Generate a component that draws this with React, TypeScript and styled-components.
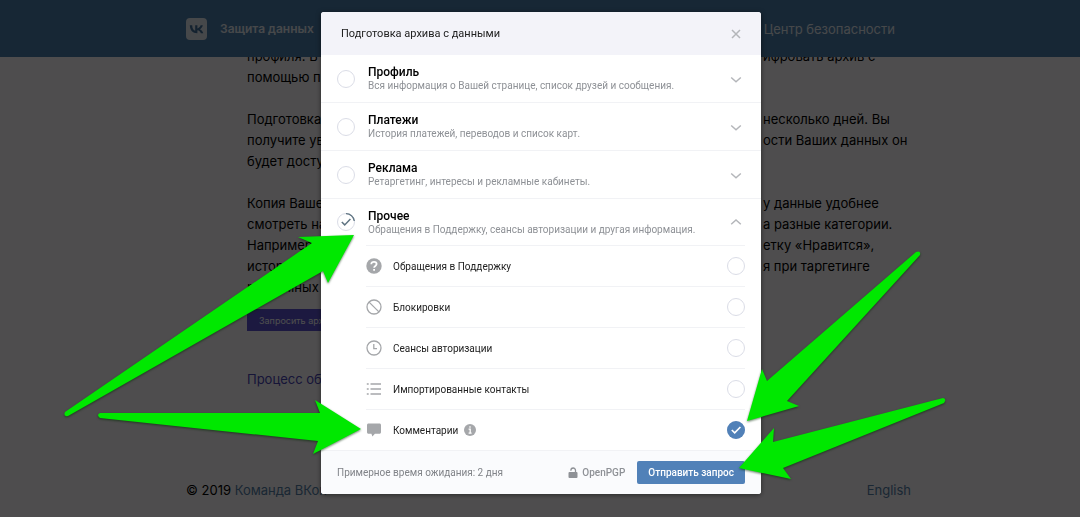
import React from 'react';
import styled, { createGlobalStyle, css } from 'styled-components';

const Global = createGlobalStyle`
  * { box-sizing: border-box; }
  body { margin: 0; background: #fffcfe; font-family: Inter, "Liberation Sans", sans-serif; overflow: hidden; }
  button { font: inherit; border: 0; padding: 0; cursor: pointer; }
`;

const Page = styled.div`
  min-height: 100vh;
  display: flex;
  flex-direction: column;
`;
const Header = styled.header`
  position: fixed;
  inset: 0 0 auto 0;
  z-index: 1;
  background: #4d7fae;
`;
const Container = styled.div`
  display: flex;
  align-items: center;
  justify-content: space-between;
  max-width: 742px;
  margin: 0 auto;
  padding-left: 17px;
`;
const HeaderBar = styled(Container)`
  height: 57px;
  padding-right: 16px;
`;
const Brand = styled.a`
  display: flex;
  align-items: center;
  gap: 13px;
  color: #fff;
  opacity: 0.85;
  font-size: 12px;
  font-weight: 600;
  text-decoration: none;
`;
const HeaderLink = styled.a`
  color: #fff;
  opacity: 0.85;
  font-size: 13px;
  text-decoration: none;
`;
const Article = styled.main`
  width: 100%;
  max-width: 742px;
  margin: 0 auto;
  padding: 46px 0 0 78px;
  font-size: 13px;
  line-height: 21px;
  color: #000;
`;
const Paragraph = styled.p`
  margin: 0 0 21px;
`;
const Line = styled.span`
  display: grid;
  grid-template-columns: 516px 1fr;
  white-space: nowrap;
`;
const RequestButton = styled.button`
  display: block;
  height: 22px;
  margin-top: -10px;
  padding: 0 12px;
  background: #5c54d0;
  color: #fff;
  font-size: 9px;
`;
const ArticleLink = styled.a`
  display: inline-block;
  margin-top: 38px;
  color: #4a45b8;
  text-decoration: none;
`;
const Footer = styled.footer`
  margin-top: auto;
  font-size: 13px;
  color: #000;
`;
const FooterBar = styled(Container)`
  height: 55px;
  a { color: #5580a8; text-decoration: none; }
`;

const Overlay = styled.div`
  position: fixed;
  inset: 0;
  z-index: 2;
  display: flex;
  justify-content: center;
  align-items: flex-start;
  padding: 12px 0 0 2px;
  background: rgba(0, 0, 0, 0.695);
  font-family: Roboto, "Liberation Sans", sans-serif;
`;
const Modal = styled.section`
  width: 440px;
  max-width: 100%;
  border-radius: 3px;
  overflow: hidden;
  background: #fff;
  box-shadow: 0 1px 5px rgba(0, 0, 0, 0.5);
`;
const ModalHeader = styled.header`
  display: flex;
  align-items: center;
  justify-content: space-between;
  height: 43px;
  padding: 0 19px 0 20px;
  background: #f3f3f9;
`;
const Title = styled.h1`
  margin: 0;
  font-size: 11px;
  font-weight: 400;
  color: #222;
`;
const IconButton = styled.button`
  display: flex;
  background: none;
  color: #b4b6ba;
`;
const Group = styled.div<{ $open?: boolean }>`
  display: flex;
  align-items: center;
  height: ${(p) => (p.$open ? 46 : 48)}px;
  padding: 0 19px 0 16px;
  ${(p) => !p.$open && css`border-bottom: 1px solid #f1f2f5;`}
`;
const GroupText = styled.label`
  flex: 1;
  margin-left: 13px;
`;
const GroupName = styled.strong`
  display: block;
  font-size: 12px;
  line-height: 14px;
  font-weight: 500;
  color: #000;
`;
const GroupHint = styled.span`
  display: block;
  font-size: 10px;
  line-height: 13px;
  color: #8e9196;
`;
const List = styled.ul`
  list-style: none;
  margin: 0;
  padding: 0 16px 0 45px;
`;
const Item = styled.li`
  display: flex;
  align-items: center;
  height: 41px;
  border-top: 1px solid #f1f2f5;
  color: #a5a7aa;
`;
const ItemLabel = styled.label`
  margin: 0 6px 0 11px;
  font-size: 10px;
  color: #222;
`;
const CheckWrap = styled.span`
  position: relative;
  display: flex;
  margin-left: auto;
`;
const GroupCheck = styled(CheckWrap)`
  margin-left: 0;
`;
const Box = styled.input`
  appearance: none;
  width: 18px;
  height: 18px;
  margin: 0;
  border: 1px solid #dadce6;
  border-radius: 50%;
  background: #fff;
`;
const Mark = styled.svg`
  position: absolute;
  inset: 0;
  pointer-events: none;
`;
const ModalFooter = styled.footer`
  display: flex;
  align-items: center;
  height: 44px;
  padding: 0 16px;
  border-top: 1px solid #f1f2f5;
  background: #fafbfd;
`;
const Wait = styled.span`
  flex: 1;
  font-size: 10px;
  color: #808388;
`;
const Pgp = styled.button`
  display: flex;
  align-items: center;
  gap: 4px;
  margin-right: 12px;
  background: none;
  font-size: 10px;
  font-weight: 500;
  color: #8e9196;
`;
const Submit = styled.button`
  height: 23px;
  padding: 0 11px;
  border-radius: 2px;
  background: #5181b8;
  color: #fff;
  font-size: 10px;
  font-weight: 500;
`;
const Arrows = styled.svg`
  position: fixed;
  top: 0;
  left: 50%;
  margin-left: -540px;
  z-index: 3;
  pointer-events: none;
  filter: drop-shadow(0 1px 1px rgba(0, 40, 0, 0.6));
`;

const paragraphs: [string, string][][] = [
  [['профиля. В', 'ифровать архив с'], ['помощью п', '']],
  [
    ['Подготовка', 'несколько дней. Вы'],
    ['получите ув', 'ости Ваших данных он'],
    ['будет досту', ''],
  ],
  [
    ['Копия Ваше', 'у данные удобнее'],
    ['смотреть на', 'а разные категории.'],
    ['Например', 'етку «Нравится»,'],
    ['историю', 'я при таргетинге'],
    ['рекламных', ''],
  ],
];

const groups = [
  { id: 'profile', name: 'Профиль', hint: 'Вся информация о Вашей странице, список друзей и сообщения.' },
  { id: 'payments', name: 'Платежи', hint: 'История платежей, переводов и список карт.' },
  { id: 'ads', name: 'Реклама', hint: 'Ретаргетинг, интересы и рекламные кабинеты.' },
  { id: 'other', name: 'Прочее', hint: 'Обращения в Поддержку, сеансы авторизации и другая информация.', open: true },
];

const Svg16 = ({ children }: { children: React.ReactNode }) => (
  <svg width="16" height="16" viewBox="0 0 16 16" fill="none" stroke="currentColor" strokeWidth="1.3">
    {children}
  </svg>
);

const items = [
  {
    id: 'support', name: 'Обращения в Поддержку',
    icon: (
      <Svg16>
        <circle cx="8" cy="8" r="7.7" fill="currentColor" stroke="none" />
        <path d="M5.300 6.300C5.300 4.700 6.400 3.800 8 3.800s2.600.9 2.600 2.300c0 1.800-2.500 1.900-2.500 3.700M8.100 11v1.800" stroke="#fff" strokeWidth="1.800" />
      </Svg16>
    ),
  },
  {
    id: 'blocks', name: 'Блокировки',
    icon: <Svg16><circle cx="8" cy="8" r="7" /><path d="M3.100 3.100l9.800 9.800" /></Svg16>,
  },
  {
    id: 'sessions', name: 'Сеансы авторизации',
    icon: <Svg16><circle cx="8" cy="8" r="7" /><path d="M7.800 4V8.700h3.200" /></Svg16>,
  },
  {
    id: 'contacts', name: 'Импортированные контакты',
    icon: <Svg16><path d="M.8 3h1.900M4.500 3H15M.8 8h1.900M4.500 8H15M.8 13h1.900M4.500 13H15" /></Svg16>,
  },
  {
    id: 'comments', name: 'Комментарии', checked: true, info: true,
    icon: (
      <Svg16>
        <path d="M2.500 1.500h11c.8 0 1.500.7 1.500 1.500v7.200c0 .8-.7 1.500-1.500 1.500H8.900L6.400 14.400 5.400 11.700H2.500c-.8 0-1.500-.7-1.500-1.500V3c0-.8.7-1.500 1.500-1.500z" fill="currentColor" stroke="none" />
      </Svg16>
    ),
  },
];

const Chevron = ({ up }: { up?: boolean }) => (
  <svg width="12" height="12" viewBox="0 0 12 12" fill="none" stroke="currentColor" strokeWidth="1.5">
    <path d={up ? 'M1.200 8.200L6 4l4.800 4.200' : 'M1.200 4.500L6 8.700l4.800-4.200'} />
  </svg>
);

export default function App() {
  return (
    <>
      <Global />
      <Page>
        <Header>
          <HeaderBar>
            <Brand href="#">
              <svg width="21" height="22" viewBox="0 0 21 22">
                <rect width="21" height="22" rx="4" fill="#fff" />
                <path d="M11.200 15.200C6.600 15.200 4 12.200 3.800 7.200h2.400c.1 3.700 1.700 5.200 3 5.500V7.200h2.200v3.200c1.300-.2 2.700-1.600 3.200-3.200h2.200c-.4 2-1.900 3.400-3 4 1.100.5 2.800 1.800 3.500 4h-2.400c-.5-1.600-1.800-2.800-3.500-3v3z" fill="#3f6d98" />
              </svg>
              Защита данных
            </Brand>
            <HeaderLink href="#">Центр безопасности</HeaderLink>
          </HeaderBar>
        </Header>
        <Article>
          {paragraphs.map((lines, i) => (
            <Paragraph key={i}>
              {lines.map(([start, end]) => (
                <Line key={start}><span>{start}</span><span>{end}</span></Line>
              ))}
            </Paragraph>
          ))}
          <RequestButton>Запросить архив</RequestButton>
          <ArticleLink href="#">Процесс обр</ArticleLink>
        </Article>
        <Footer>
          <FooterBar>
            <span>© 2019 <a href="#">Команда ВКон</a></span>
            <a href="#">English</a>
          </FooterBar>
        </Footer>
      </Page>

      <Overlay>
        <Modal role="dialog" aria-labelledby="dialog-title">
          <ModalHeader>
            <Title id="dialog-title">Подготовка архива с данными</Title>
            <IconButton aria-label="Закрыть">
              <svg width="12" height="12" viewBox="0 0 12 12" stroke="currentColor" strokeWidth="1.5">
                <path d="M2 2l8 8M10 2l-8 8" />
              </svg>
            </IconButton>
          </ModalHeader>
          {groups.map((g) => (
            <Group key={g.id} $open={g.open}>
              <GroupCheck>
                <Box type="checkbox" id={g.id} />
                {g.open && (
                  <Mark width="18" height="18" viewBox="0 0 18 18" fill="none" stroke="#5f7482">
                    <path d="M9 .7A8.300 8.300 0 0 1 17.300 8" strokeWidth="1.3" />
                    <path d="M4.800 9l2.900 2.900L13.400 6" strokeWidth="1.5" />
                  </Mark>
                )}
              </GroupCheck>
              <GroupText htmlFor={g.id}>
                <GroupName>{g.name}</GroupName>
                <GroupHint>{g.hint}</GroupHint>
              </GroupText>
              <IconButton aria-label={g.name}><Chevron up={g.open} /></IconButton>
            </Group>
          ))}
          <List>
            {items.map((it) => (
              <Item key={it.id}>
                {it.icon}
                <ItemLabel htmlFor={it.id}>{it.name}</ItemLabel>
                {it.info && (
                  <svg width="12" height="12" viewBox="0 0 12 12">
                    <circle cx="6" cy="6" r="6" fill="#a5a7aa" />
                    <path d="M6 2.200v1.600M4.600 5.200H6.200V9M4.600 9.200h3" stroke="#fff" strokeWidth="1.3" fill="none" />
                  </svg>
                )}
                <CheckWrap>
                  <Box type="checkbox" id={it.id} defaultChecked={it.checked} />
                  {it.checked && (
                    <Mark width="18" height="18" viewBox="0 0 18 18" fill="none">
                      <circle cx="9" cy="9" r="9" fill="#5181b8" />
                      <path d="M4.800 9l2.900 2.900L13.400 6" stroke="#fff" strokeWidth="1.6" />
                    </Mark>
                  )}
                </CheckWrap>
              </Item>
            ))}
          </List>
          <ModalFooter>
            <Wait>Примерное время ожидания: 2 дня</Wait>
            <Pgp>
              <svg width="10" height="12" viewBox="0 0 10 12" fill="none" stroke="currentColor">
                <rect x="0.500" y="5" width="9" height="6" rx="1" fill="currentColor" stroke="none" />
                <path d="M7.500 5.500V3.300a2.300 2.300 0 0 0-4.600 0V3.800" strokeWidth="1.3" />
              </svg>
              OpenPGP
            </Pgp>
            <Submit>Отправить запрос</Submit>
          </ModalFooter>
        </Modal>
      </Overlay>

      <Arrows width="1080" height="517" viewBox="0 0 1080 517" fill="#00e800" aria-hidden="true">
        <path d="M65 412L312 243L298 237L354 235L328 283L323 271L68 416Q63 417 65 412Z" />
        <path d="M100 413L320 413L315 400L361 429L313 454L318 441L100 418Q96 415 100 413Z" />
        <path d="M916 252L767 381L762 369L747 421L799 406L787 401L920 255Q921 250 916 252Z" />
        <path d="M943 398L773 442L774 428L739 468L791 479L783 468L944 403Q947 399 943 398Z" />
      </Arrows>
    </>
  );
}
